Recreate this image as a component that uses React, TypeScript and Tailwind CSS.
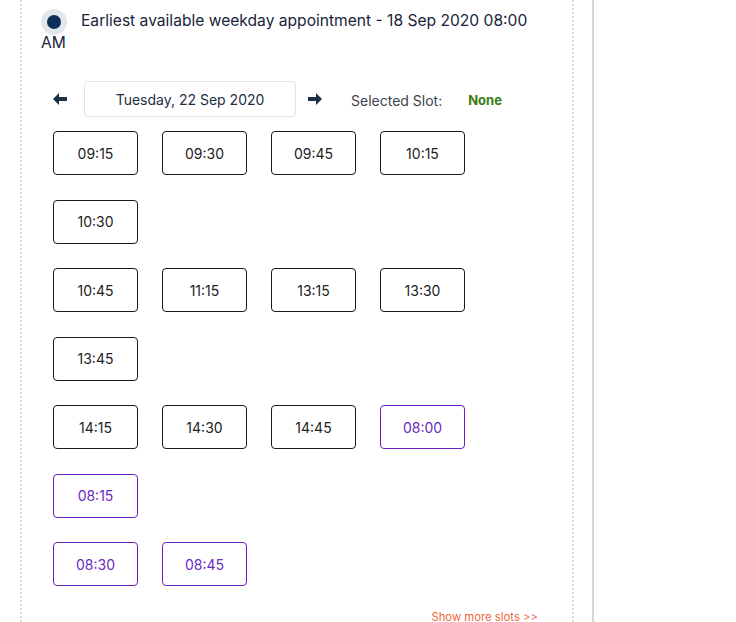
import { useState } from 'react';

type Slot = { time: string; alt?: boolean };

const groups: Slot[][] = [
  [{ time: '09:15' }, { time: '09:30' }, { time: '09:45' }, { time: '10:15' }, { time: '10:30' }],
  [{ time: '10:45' }, { time: '11:15' }, { time: '13:15' }, { time: '13:30' }, { time: '13:45' }],
  [{ time: '14:15' }, { time: '14:30' }, { time: '14:45' }, { time: '08:00', alt: true }, { time: '08:15', alt: true }],
  [{ time: '08:30', alt: true }, { time: '08:45', alt: true }],
];

function ArrowLeft() {
  return (
    <svg width="14" height="12" viewBox="0 0 14 12" className="shrink-0">
      <path d="M0 6 L6 0 L6 4 L14 4 L14 8 L6 8 L6 12 Z" fill="#1d3046" />
    </svg>
  );
}

function ArrowRight() {
  return (
    <svg width="14" height="12" viewBox="0 0 14 12" className="shrink-0">
      <path d="M14 6 L8 0 L8 4 L0 4 L0 8 L8 8 L8 12 Z" fill="#1d3046" />
    </svg>
  );
}

export default function App() {
  const [selected, setSelected] = useState<string | null>(null);

  return (
    <div className="flex w-[736px] h-[622px] overflow-hidden bg-white font-['Inter',sans-serif]">
      <div className="ml-[20px] w-[554px] shrink-0 border-x-2 border-dotted border-[#dedede] px-[19px] pt-[10px]">
        <label className="block text-[15.6px] leading-[22px] text-[#18253a]">
          <span className="inline-flex align-middle mr-[14px] w-[26px] h-[14px] items-center justify-center">
            <span className="shrink-0 w-[26px] h-[26px] rounded-full bg-[#e3e6eb] flex items-center justify-center">
              <span className="w-[14px] h-[14px] rounded-full bg-[#0b2f57]" />
            </span>
          </span>
          Earliest available weekday appointment - 18 Sep 2020 08:00 AM
        </label>

        <div className="mt-[27px] ml-[12px] flex items-center h-[36px]">
          <ArrowLeft />
          <div className="ml-[17px] w-[212px] h-[36px] rounded-[4px] border border-[#e2e2e2] flex items-center justify-center text-[14px] text-[#1e2f45]">
            Tuesday, 22 Sep 2020
          </div>
          <div className="ml-[12px]">
            <ArrowRight />
          </div>
          <span className="ml-[29px] pt-[3px] text-[14px] text-[#3d434b]">Selected Slot:</span>
          <span className="ml-[26px] pt-[3px] text-[13px] font-bold text-[#3a7b12]">{selected ?? 'None'}</span>
        </div>

        <div className="mt-[14px] ml-[12px] flex flex-col gap-[24.5px]">
          {groups.map((group, gi) => (
            <div key={gi} className="w-[440px] flex flex-wrap gap-x-[24px] gap-y-[24.5px]">
              {group.map((slot) => (
                <button
                  key={slot.time}
                  onClick={() => setSelected(slot.time)}
                  className={
                    slot.alt
                      ? 'w-[85px] h-[44px] rounded-[4px] border border-[#6a1fc2] text-[14px] text-[#6a2cc0]'
                      : 'w-[85px] h-[44px] rounded-[4px] border border-[#1a1a1a] text-[14px] text-[#222]'
                  }
                >
                  {slot.time}
                </button>
              ))}
            </div>
          ))}
        </div>

        <div className="mt-[24px] pr-[15px] flex justify-end">
          <a className="text-[11.3px] leading-[14px] text-[#f0683f] cursor-pointer">Show more slots &gt;&gt;</a>
        </div>
      </div>
      <div className="ml-[18px] w-[2px] shrink-0 bg-[#d6d6d6]" />
    </div>
  );
}
